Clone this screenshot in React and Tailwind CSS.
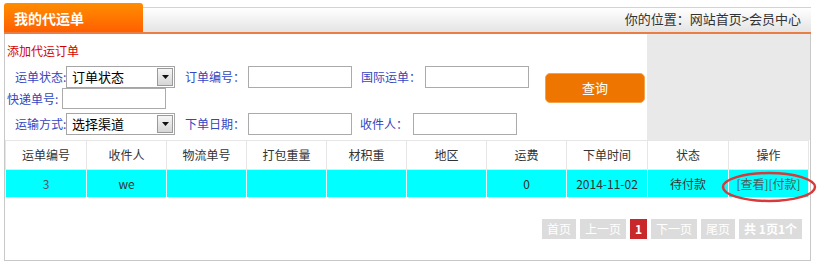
import React from 'react';

const cols = ['运单编号', '收件人', '物流单号', '打包重量', '材积重', '地区', '运费', '下单时间', '状态', '操作'];
const widths = ['w-[81px]', 'w-[80px]', 'w-[80px]', 'w-[80px]', 'w-[80px]', 'w-[80px]', 'w-[80px]', 'w-[81px]', 'w-[81px]', 'w-[80px]'];
const row = ['3', 'we', '', '', '', '', '0', '2014-11-02', '待付款', '[查看][付款]'];

function Select({ value }) {
  return (
    <div className="flex items-center w-[109px] h-[22px] border border-[#a5a5a5] bg-white pl-[5px] pr-[1px]">
      <span className="flex-1 text-[13px] leading-[20px] text-black">{value}</span>
      <div className="flex items-center justify-center w-[16px] h-[18px] border border-[#9a9a9a] bg-gradient-to-b from-[#f6f6f6] to-[#d6d6d6]">
        <svg width="7" height="4" viewBox="0 0 7 4">
          <path d="M0 0h7L3.5 4z" fill="#111" />
        </svg>
      </div>
    </div>
  );
}

function Input({ h = 'h-[22px]' }) {
  return <div className={`w-[104px] ${h} border border-[#ababab] bg-white`} />;
}

function Label({ children, className = '' }) {
  return <span className={`text-[12px] leading-[22px] text-[#3446c0] whitespace-nowrap ${className}`}>{children}</span>;
}

export default function App() {
  return (
    <div className="relative w-[832px] h-[270px] bg-white font-['Noto_Sans_CJK_SC',sans-serif] overflow-hidden">
      <div className="ml-[4px] w-[807px] pt-[3px]">
        {/* header */}
        <div className="flex items-end h-[29px]">
          <div className="w-[139px] h-[29px] rounded-t-[3px] bg-gradient-to-b from-[#ff8c00] to-[#ff5f00] pl-[10px] text-[14px] font-bold leading-[31px] text-white">
            我的代运单
          </div>
          <div className="flex-1 h-[25px] border-t border-[#d2d2d2] bg-gradient-to-b from-white to-[#e4e4e4] text-right pr-[10px] text-[13px] leading-[22px] text-[#333]">
            你的位置：网站首页&gt;会员中心
          </div>
        </div>
        <div className="h-[2px] bg-[#ea7d43]" />

        {/* panel */}
        <div className="border-l border-r border-b border-[#c8c8c8] pb-[21px]">
          <div className="flex h-[106px]">
            <div className="flex-1 flex flex-col">
              <div className="h-[32px] pt-[9px] pl-[2px] text-[12px] leading-[16px] text-[#d40000]">添加代运订单</div>
              <div className="flex">
                <div className="w-[540px] flex flex-col">
                  <div className="flex items-center h-[22px] pl-[10px]">
                    <Label className="w-[51px]">运单状态:</Label>
                    <Select value="订单状态" />
                    <Label className="ml-[10px] w-[63px]">订单编号：</Label>
                    <Input />
                    <Label className="ml-[9px] w-[64px]">国际运单：</Label>
                    <Input />
                  </div>
                  <div className="flex items-center h-[21px] pl-[2px]">
                    <Label className="w-[55px]">快递单号:</Label>
                    <Input h="h-[21px]" />
                  </div>
                  <div className="flex items-center h-[22px] mt-[4px] pl-[10px]">
                    <Label className="w-[51px]">运输方式:</Label>
                    <Select value="选择渠道" />
                    <Label className="ml-[10px] w-[63px]">下单日期：</Label>
                    <Input />
                    <Label className="ml-[8px] w-[53px]">收件人：</Label>
                    <Input />
                  </div>
                </div>
                <button className="mt-[7px] w-[100px] h-[30px] rounded-[5px] border border-[#f3a248] bg-[#ee7600] text-[13px] text-white leading-[28px]">
                  查询
                </button>
              </div>
            </div>
            <div className="w-[163px] bg-[#e9e9e9]" />
          </div>

          <table className="table-fixed border-collapse w-[803px] text-[12px]">
            <thead>
              <tr className="h-[29px]">
                {cols.map((c, i) => (
                  <th key={c} className={`${widths[i]} border border-[#e6e6e6] font-normal text-[#333] text-center`}>{c}</th>
                ))}
              </tr>
            </thead>
            <tbody>
              <tr className="h-[28px] bg-[#00ffff]">
                {row.map((c, i) => (
                  <td key={i} className={`border border-[#e8f4f4] text-center ${i === 0 ? 'text-[#556]' : i === 9 ? 'text-[#4d5a5a]' : 'text-[#333]'}`}>{c}</td>
                ))}
              </tr>
            </tbody>
          </table>

          <div className="flex justify-end gap-[4px] mt-[21px] pr-[8px] text-[12px] leading-[20px] text-white">
            <span className="h-[20px] px-[5px] bg-[#dcdcdc]">首页</span>
            <span className="h-[20px] px-[5px] bg-[#dcdcdc]">上一页</span>
            <span className="h-[20px] px-[5px] bg-[#c8282a] font-bold">1</span>
            <span className="h-[20px] px-[5px] bg-[#dcdcdc]">下一页</span>
            <span className="h-[20px] px-[5px] bg-[#dcdcdc]">尾页</span>
            <span className="h-[20px] px-[5px] bg-[#dcdcdc] font-bold">共 1页1个</span>
          </div>
        </div>
      </div>

      <svg className="absolute left-[721px] top-[171px]" width="96" height="32" viewBox="0 0 96 32">
        <ellipse cx="48" cy="16" rx="46" ry="14" fill="none" stroke="#d63a3a" strokeWidth="2.5" />
      </svg>
    </div>
  );
}
